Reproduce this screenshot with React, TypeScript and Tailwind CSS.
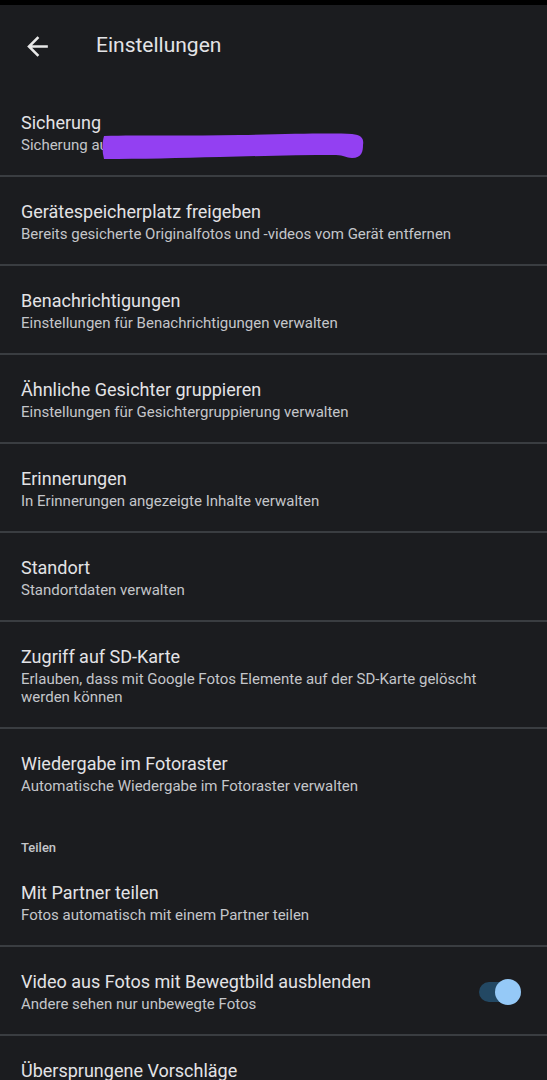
import React from "react"

type Item = { title: string; sub: string; toggle?: boolean; first?: boolean; noDivider?: boolean; redacted?: boolean }

const items: Item[] = [
  { title: "Sicherung", sub: "Sicherung au", first: true, redacted: true },
  { title: "Gerätespeicherplatz freigeben", sub: "Bereits gesicherte Originalfotos und -videos vom Gerät entfernen" },
  { title: "Benachrichtigungen", sub: "Einstellungen für Benachrichtigungen verwalten" },
  { title: "Ähnliche Gesichter gruppieren", sub: "Einstellungen für Gesichtergruppierung verwalten" },
  { title: "Erinnerungen", sub: "In Erinnerungen angezeigte Inhalte verwalten" },
  { title: "Standort", sub: "Standortdaten verwalten" },
  { title: "Zugriff auf SD-Karte", sub: "Erlauben, dass mit Google Fotos Elemente auf der SD-Karte gelöscht werden können" },
  { title: "Wiedergabe im Fotoraster", sub: "Automatische Wiedergabe im Fotoraster verwalten", noDivider: true },
]

const sharing: Item[] = [
  { title: "Mit Partner teilen", sub: "Fotos automatisch mit einem Partner teilen" },
  { title: "Video aus Fotos mit Bewegtbild ausblenden", sub: "Andere sehen nur unbewegte Fotos", toggle: true },
  { title: "Übersprungene Vorschläge", sub: "" },
]

function Redaction() {
  // purple marker stroke over the backup account
  return (
    <svg className="absolute left-[100px] top-[44px]" width="268" height="30" viewBox="0 0 268 30">
      <path
        d="M4 5 C40 4 90 5 140 4 C190 3 230 2 252 3 C262 4 264 8 263 14 C263 20 262 27 252 27 C246 27 244 24 236 24 C200 24 160 25 120 26 C80 27 40 28 4 28 C2 20 2 12 4 5 Z"
        fill="#9340f2"
      />
    </svg>
  )
}

function Row({ item }: { item: Item }) {
  return (
    <div className={item.noDivider ? "" : "border-b-2 border-[#3a3d41]"}>
      <div className={`relative flex items-center pl-[21px] pr-[26px] ${item.first ? "pt-[25px]" : "pt-[24px]"} pb-[21px]`}>
        <div className="flex-1 min-w-0">
          <div className="text-[18px] leading-[22px] text-[#e3e3e6]">{item.title}</div>
          {item.sub && <div className="mt-[2px] text-[15px] leading-[18px] text-[#c4c6ca] pr-[30px]">{item.sub}</div>}
        </div>
        {item.toggle && (
          <div className="relative w-[42px] h-[26px] flex items-center">
            <div className="w-[36px] h-[20px] rounded-full bg-[#234863]" />
            <div className="absolute right-0 top-0 w-[26px] h-[26px] rounded-full bg-[#95c9f7]" />
          </div>
        )}
        {item.redacted && <Redaction />}
      </div>
    </div>
  )
}

export default function App() {
  return (
    <div className="w-[547px] h-[1080px] overflow-hidden bg-[#1b1c1f]" style={{ fontFamily: "Roboto, 'Noto Sans', sans-serif" }}>
      <div className="h-[5px] bg-black" />
      <div className="h-[82px] flex items-center">
        <svg className="ml-[22px]" width="31" height="31" viewBox="0 0 24 24">
          <path d="M20 11H7.83l5.59-5.59L12 4l-8 8 8 8 1.41-1.41L7.83 13H20v-2z" fill="#e8e8e8" />
        </svg>
        <span className="ml-[43px] text-[21px] text-[#e3e3e6]">Einstellungen</span>
      </div>
      {items.map((it) => (
        <Row key={it.title} item={it} />
      ))}
      <div className="pl-[21px] pt-[23px] pb-[1px] text-[13px] leading-[18px] font-medium text-[#c4c6ca]">Teilen</div>
      {sharing.map((it) => (
        <Row key={it.title} item={it} />
      ))}
    </div>
  )
}
